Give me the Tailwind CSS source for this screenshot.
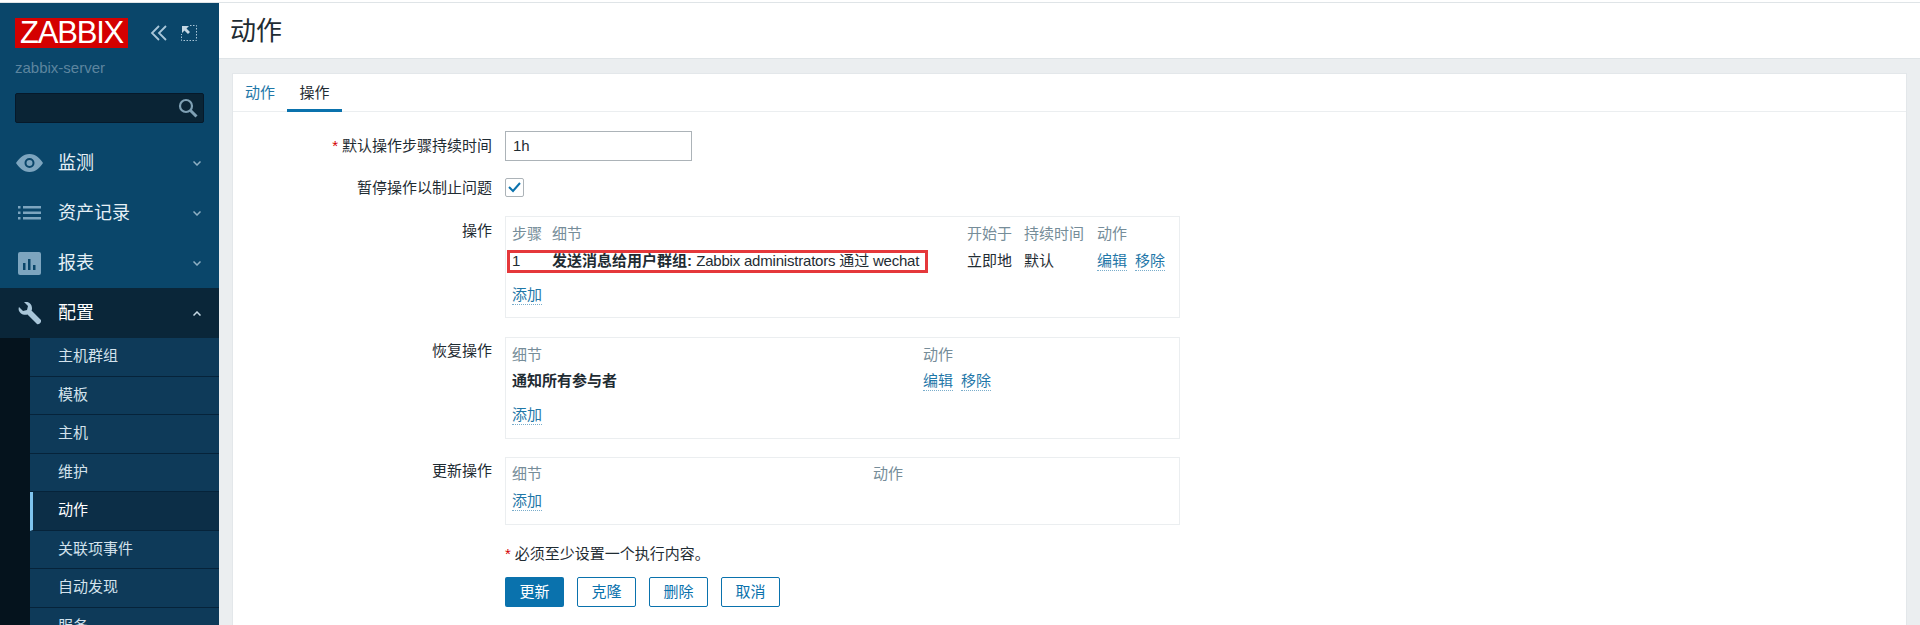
<!DOCTYPE html>
<html>
  <head>
    <title>动作</title>
    <meta charset="utf-8" />
    <script src="https://cdn.jsdelivr.net/npm/@tailwindcss/browser@4"></script>
  </head>
  <body class="h-[625px] overflow-hidden bg-white font-['Liberation_Sans','Noto_Sans_CJK_SC',sans-serif] text-[15px] text-[#1f2c33]">
    <div class="h-[3px] border-b border-[#dfe4e7]"></div>
    <div class="flex h-[622px] overflow-hidden">
      <!-- sidebar -->
      <aside class="w-[219px] shrink-0 bg-[#0a466a] overflow-hidden">
        <div class="px-[15px] pt-[15px]">
          <div class="flex items-center">
            <div class="w-[113px] h-[30px] bg-[#d40000] text-white text-[31px] leading-[30px] text-center tracking-[-1.2px]">ZABBIX</div>
            <svg class="ml-[22px]" width="18" height="16" viewBox="0 0 18 16" fill="none" stroke="#a9c6d9" stroke-width="1.800"><path d="M9 1 2 8l7 7M16 1 9 8l7 7" /></svg>
            <svg class="ml-[13px]" width="16" height="16" viewBox="0 0 16 16" fill="none" stroke="#a9c6d9"><path d="M9 .5h6.500V15.500H.5V9" stroke-dasharray="1.500 1.500" /><path d="M1 1h7L5.500 3.500 9 7 7 9 3.500 5.500 1 8z" fill="#c5d8e4" stroke="none" /></svg>
          </div>
          <div class="mt-[10px] text-[#5d859f] leading-[20px]">zabbix-server</div>
          <div class="mt-[15px] h-[30px] bg-[#0a2435] border border-[#06192a] rounded-[2px] flex items-center justify-end pr-[5px]">
            <svg width="20" height="20" viewBox="0 0 20 20" fill="none" stroke="#7fa0b4"><circle cx="8" cy="8" r="6" stroke-width="2.200" /><path d="m12.500 12.500 6 6" stroke-width="3" /></svg>
          </div>
        </div>
        <nav class="mt-[15px]">
          <a class="flex items-center h-[50px] pl-[16px] pr-[18px] text-[#e6f0f6] text-[18px]">
            <svg class="w-[27px]" height="20" viewBox="0 0 27 20"><path fill="#7da5bf" fill-rule="evenodd" d="M13.500 1C20 1 24.500 6 27 10c-2.500 4-7 9-13.500 9S2.500 14 0 10C2.500 6 7 1 13.500 1zm0 4a5 5 0 1 0 0 10 5 5 0 0 0 0-10zm0 2a3 3 0 1 1 0 6 3 3 0 0 1 0-6z" /></svg>
            <span class="ml-[15px] flex-1">监测</span>
            <svg width="8" height="5" viewBox="0 0 8 5" fill="none" stroke="#8fb0c4" stroke-width="1.500"><path d="m.5.500 3.500 3.500L7.500.5" /></svg>
          </a>
          <a class="flex items-center h-[50px] pl-[18px] pr-[18px] text-[#e6f0f6] text-[18px]">
            <svg class="w-[23px]" height="14" viewBox="0 0 23 14" fill="#7da5bf"><path d="M0 0h2.500v2.500H0zM5 0h18v2.500H5zM0 5.500h2.500V8H0zM5 5.500h18V8H5zM0 11h2.500v2.500H0zM5 11h18v2.500H5z" /></svg>
            <span class="ml-[17px] flex-1">资产记录</span>
            <svg width="8" height="5" viewBox="0 0 8 5" fill="none" stroke="#8fb0c4" stroke-width="1.500"><path d="m.5.500 3.500 3.500L7.500.5" /></svg>
          </a>
          <a class="flex items-center h-[50px] pl-[18px] pr-[18px] text-[#e6f0f6] text-[18px]">
            <svg class="w-[23px]" height="23" viewBox="0 0 23 23"><rect width="23" height="23" rx="2" fill="#7da5bf" /><path fill="#0a466a" d="M5 11h2.500v7H5zM10 7h2.500v11H10zM15 13h2.500v5H15z" /></svg>
            <span class="ml-[17px] flex-1">报表</span>
            <svg width="8" height="5" viewBox="0 0 8 5" fill="none" stroke="#8fb0c4" stroke-width="1.500"><path d="m.5.500 3.500 3.500L7.500.5" /></svg>
          </a>
          <a class="flex items-center h-[50px] pl-[18px] pr-[18px] bg-[#0a2639] text-white text-[18px]">
            <svg class="w-[23px]" height="23" viewBox="0 0 23 23"><path fill="#a9c6d9" d="M1 5 5 9l4-1 1-4-4-4C9-1 14 1 14 6c0 1 0 2-.5 2.500L23 18c1 2-2 5-4 4l-9.500-9.500C5 14-1 10 1 5z" /></svg>
            <span class="ml-[17px] flex-1">配置</span>
            <svg width="8" height="5" viewBox="0 0 8 5" fill="none" stroke="#c5d8e4" stroke-width="1.500"><path d="m.5 4.500 3.500-3.500 3.500 3.500" /></svg>
          </a>
          <ul class="bg-[#05131d] pl-[30px] text-[#d3e2ec]">
            <li class="h-[38.500px] pl-[28px] pb-[1px] flex items-center bg-[#0e3a59] border-b border-[#06233a]">主机群组</li>
            <li class="h-[38.500px] pl-[28px] pb-[1px] flex items-center bg-[#0e3a59] border-b border-[#06233a]">模板</li>
            <li class="h-[38.500px] pl-[28px] pb-[1px] flex items-center bg-[#0e3a59] border-b border-[#06233a]">主机</li>
            <li class="h-[38.500px] pl-[28px] pb-[1px] flex items-center bg-[#0e3a59] border-b border-[#06233a]">维护</li>
            <li class="h-[38.500px] pl-[25px] pb-[1px] flex items-center bg-[#0c2e47] border-b border-[#06233a] border-l-[3px] border-l-[#7fc4ee] text-white">动作</li>
            <li class="h-[38.500px] pl-[28px] pb-[1px] flex items-center bg-[#0e3a59] border-b border-[#06233a]">关联项事件</li>
            <li class="h-[38.500px] pl-[28px] pb-[1px] flex items-center bg-[#0e3a59] border-b border-[#06233a]">自动发现</li>
            <li class="h-[38.500px] pl-[28px] pb-[1px] flex items-center bg-[#0e3a59] border-b border-[#06233a]">服务</li>
          </ul>
        </nav>
      </aside>

      <!-- content -->
      <main class="flex-1 bg-[#ebeef0] overflow-hidden">
        <header class="h-[56px] bg-white border-b border-[#dfe4e7] pl-[11px] pt-[2px] flex items-center text-[26px] text-[#1f2c33]">动作</header>
        <section class="relative ml-[13px] mr-[13px] mt-[14px] h-[560px] bg-white border border-[#e3e7ea]">
          <div class="flex h-[38px] border-b border-[#ebeef0] text-[15px]">
            <a class="w-[54px] text-center leading-[37px] text-[#1f77a8]">动作</a>
            <a class="w-[55px] text-center leading-[37px] border-b-[3px] border-[#0a72ad] h-[38px]">操作</a>
          </div>

          <!-- form rows -->
          <div>
            <div class="flex mt-[19px] h-[30px]">
              <label class="w-[259px] text-right leading-[30px]"><span class="text-[#d40000] mr-[4px]">*</span>默认操作步骤持续时间</label>
              <div class="ml-[13px] w-[187px] h-[30px] border border-[#acb3b8] px-[7px] leading-[28px]">1h</div>
            </div>
            <div class="flex mt-[17px] h-[20px]">
              <label class="w-[259px] text-right leading-[20px]">暂停操作以制止问题</label>
              <div class="ml-[13px] w-[19px] h-[19px] border border-[#acb3b8] rounded-[2px] flex items-center justify-center">
                <svg width="13" height="11" viewBox="0 0 13 11" fill="none" stroke="#0a72ad" stroke-width="2"><path d="m1 5 4 4 7-8" /></svg>
              </div>
            </div>

            <div class="flex mt-[18px]">
              <label class="w-[259px] text-right leading-[20px] pt-[5px]">操作</label>
              <div class="ml-[13px] w-[675px] h-[102px] border border-[#ebeef0] pl-[6px] pt-[7px]">
                <div class="grid grid-cols-[40px_415px_57px_73px_auto] leading-[20px] text-[#768d99]">
                  <span>步骤</span><span>细节</span><span>开始于</span><span>持续时间</span><span>动作</span>
                </div>
                <div class="grid grid-cols-[40px_415px_57px_73px_auto] mt-[7px] leading-[20px]">
                  <span>1</span>
                  <span><b>发送消息给用户群组:</b> <span class="tracking-[-0.2px]">Zabbix administrators 通过 wechat</span></span>
                  <span>立即地</span><span>默认</span>
                  <span class="flex gap-[8px] text-[#1f77a8]"><a class="border-b border-dotted border-[#1f77a8]/60 h-[20px]">编辑</a><a class="border-b border-dotted border-[#1f77a8]/60 h-[20px]">移除</a></span>
                </div>
                <a class="inline-block mt-[14px] leading-[19px] text-[#1f77a8] border-b border-dotted border-[#1f77a8]/60">添加</a>
              </div>
            </div>

            <div class="flex mt-[19px]">
              <label class="w-[259px] text-right leading-[20px] pt-[4px]">恢复操作</label>
              <div class="ml-[13px] w-[675px] h-[102px] border border-[#ebeef0] pl-[6px] pt-[7px]">
                <div class="grid grid-cols-[411px_auto] leading-[20px] text-[#768d99]"><span>细节</span><span>动作</span></div>
                <div class="grid grid-cols-[411px_auto] mt-[6px] leading-[20px]">
                  <b>通知所有参与者</b>
                  <span class="flex gap-[8px] text-[#1f77a8]"><a class="border-b border-dotted border-[#1f77a8]/60 h-[20px]">编辑</a><a class="border-b border-dotted border-[#1f77a8]/60 h-[20px]">移除</a></span>
                </div>
                <a class="inline-block mt-[14px] leading-[19px] text-[#1f77a8] border-b border-dotted border-[#1f77a8]/60">添加</a>
              </div>
            </div>

            <div class="flex mt-[18px]">
              <label class="w-[259px] text-right leading-[20px] pt-[4px]">更新操作</label>
              <div class="ml-[13px] w-[675px] h-[68px] border border-[#ebeef0] pl-[6px] pt-[6px]">
                <div class="grid grid-cols-[361px_auto] leading-[20px] text-[#768d99]"><span>细节</span><span>动作</span></div>
                <a class="inline-block mt-[7px] leading-[19px] text-[#1f77a8] border-b border-dotted border-[#1f77a8]/60">添加</a>
              </div>
            </div>

            <div class="ml-[272px] mt-[19px] leading-[20px]"><span class="text-[#d40000] mr-[4px]">*</span>必须至少设置一个执行内容。</div>
            <div class="ml-[272px] mt-[13px] flex gap-[13px]">
              <button class="w-[59px] h-[30px] rounded-[2px] bg-[#0a72ad] text-white">更新</button>
              <button class="w-[59px] h-[30px] rounded-[2px] border border-[#0a72ad] text-[#0a72ad]">克隆</button>
              <button class="w-[59px] h-[30px] rounded-[2px] border border-[#0a72ad] text-[#0a72ad]">删除</button>
              <button class="w-[59px] h-[30px] rounded-[2px] border border-[#0a72ad] text-[#0a72ad]">取消</button>
            </div>
          </div>

          <!-- annotation drawn over the screenshot -->
          <div class="absolute left-[274px] top-[176px] w-[421px] h-[23px] border-[3px] border-[#e5383b]"></div>
        </section>
      </main>
    </div>
  </body>
</html>
